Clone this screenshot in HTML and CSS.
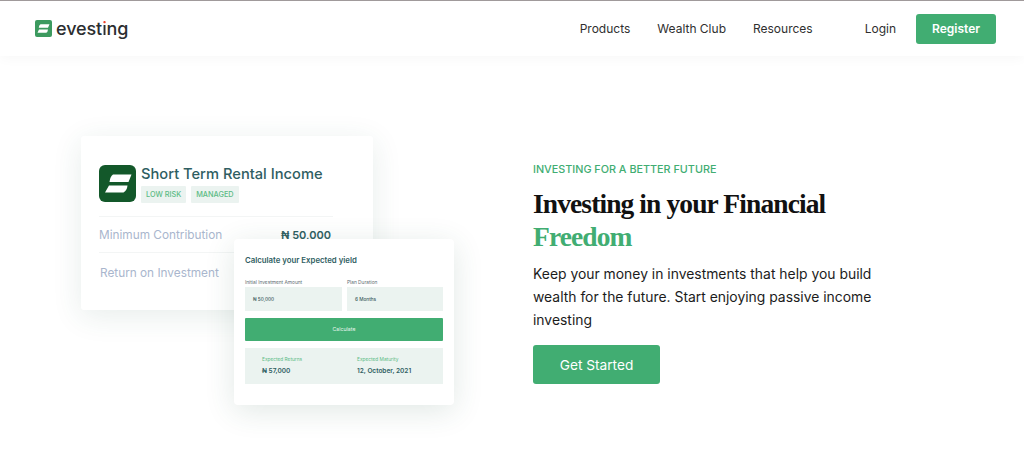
FILE: index.html
```html
<!DOCTYPE html>
<html lang="en">
<head>
<meta charset="utf-8">
<title>evesting</title>
<link rel="stylesheet" href="styles.css">
</head>
<body>
<header class="header">
  <a class="brand">
    <svg class="brand-icon" viewBox="0 0 34 34"><rect width="34" height="34" rx="4" fill="#3c9a5f"/><path d="M11 8.500H29L26 15.500H7.500Q8 10 11 8.500ZM8 19H26Q25.500 24 22.500 25.500H5Z" fill="#fff"/></svg>
    <span class="brand-name">evest<span class="brand-i">i</span>ng</span>
  </a>
  <nav class="nav">
    <a>Products</a><a>Wealth Club</a><a>Resources</a>
  </nav>
  <a class="login">Login</a>
  <a class="register">Register</a>
</header>
<main class="hero">
  <div class="art">
    <section class="rental">
      <div class="rental-head">
        <svg class="rental-icon" viewBox="0 0 37 37"><rect width="37" height="37" rx="6" fill="#13582a"/><path d="M14 9.500H32.500L29.500 17H10.500Q11 11.500 14 9.500ZM10 20.500H28.500Q28 25.500 24.500 27.500H6Z" fill="#fff"/></svg>
        <div>
          <h2 class="rental-title">Short Term Rental Income</h2>
          <div class="tags"><span class="tag">LOW RISK</span><span class="tag">MANAGED</span></div>
        </div>
      </div>
      <div class="row first"><span>Minimum Contribution</span><b>₦ 50,000</b></div>
      <div class="row last"><span>Return on Investment</span></div>
    </section>
    <section class="calc">
      <h3 class="calc-title">Calculate your Expected yield</h3>
      <div class="fields">
        <div class="field"><label>Initial Investment Amount</label><div class="input">₦ 50,000</div></div>
        <div class="field"><label>Plan Duration</label><div class="input">6 Months</div></div>
      </div>
      <div class="calc-btn">Calculate</div>
      <div class="result">
        <div><small>Expected Returns</small><b>₦ 57,000</b></div>
        <div><small>Expected Maturity</small><b>12, October, 2021</b></div>
      </div>
    </section>
  </div>
  <div class="copy">
    <p class="eyebrow">INVESTING FOR A BETTER FUTURE</p>
    <h1 class="title">Investing in your Financial <em>Freedom</em></h1>
    <p class="lead">Keep your money in investments that help you build wealth for the future. Start enjoying passive income investing</p>
    <a class="cta">Get Started</a>
  </div>
</main>
</body>
</html>
```
FILE: styles.css
```css
* { box-sizing: border-box; }
html, body { margin: 0; }
body {
  height: 464px;
  overflow: hidden;
  background: #fff;
  font-family: "Inter", "Noto Sans", sans-serif;
  border-top: 1px solid #a09a9b;
}
.header {
  height: 55px;
  display: flex;
  align-items: center;
  padding: 0 28px 0 35px;
  box-shadow: 0 2px 12px rgba(0, 0, 0, .035);
  position: relative;
}
.brand { display: flex; align-items: center; gap: 4px; }
.brand-icon { width: 17px; height: 17px; }
.brand-name {
  font-size: 18px;
  font-weight: 500;
  color: #2b2e30;
  letter-spacing: -.1px;
}
.brand-i {
  color: transparent;
  background: linear-gradient(#f0442c 0, #f0442c 34%, #2b2e30 34%);
  -webkit-background-clip: text;
  background-clip: text;
}
.nav { display: flex; gap: 27px; margin-left: auto; font-size: 12px; color: #2f2f2f; }
.login { margin-left: 52px; font-size: 12px; color: #2f2f2f; }
.register {
  margin-left: 20px;
  width: 80px;
  height: 30px;
  display: flex;
  align-items: center;
  justify-content: center;
  background: #41ad72;
  color: #fff;
  font-size: 12px;
  font-weight: 600;
  border-radius: 3px;
}
.hero { display: flex; }
.art { position: relative; width: 533px; height: 408px; flex: none; }
.rental {
  position: absolute;
  left: 81px;
  top: 80px;
  width: 292px;
  height: 174px;
  padding: 29px 18px 0;
  background: #fff;
  border-radius: 3px;
  box-shadow: 0 6px 30px rgba(40, 90, 70, .11);
}
.rental-head { display: flex; gap: 5px; height: 52px; border-bottom: 1px solid #f3f5f5; margin-right: 22px; }
.rental-icon { width: 37px; height: 37px; flex: none; }
.rental-title { margin: 0 0 3px; font-size: 14.700px; font-weight: 500; line-height: 18px; color: #2f5e62; white-space: nowrap; }
.tags { display: flex; gap: 5px; }
.tag { background: #ebf3f0; color: #5cbb85; font-size: 7.300px; font-weight: 500; line-height: 17px; padding: 0 5px; border-radius: 1px; }
.row {
  display: flex;
  justify-content: space-between;
  align-items: center;
  font-size: 11.800px;
  color: #a9b6cd;
}
.row.first { height: 36px; border-bottom: 1px solid #f3f5f5; margin-right: 22px; padding-right: 2px; }
.row b { font-size: 11px; font-weight: 600; color: #2f5e62; }
.row.last { height: 40px; padding-left: 1px; }
.calc {
  position: absolute;
  left: 234px;
  top: 183px;
  width: 220px;
  height: 166px;
  padding: 16px 11px 0;
  background: #fff;
  border-radius: 4px;
  box-shadow: 0 6px 30px rgba(40, 90, 70, .14);
}
.calc-title { margin: 0 0 14px; font-size: 7.800px; line-height: 10px; font-weight: 600; color: #2f5e62; }
.fields { display: flex; gap: 5px; }
.field:first-child { width: 97px; }
.field:last-child { width: 96px; }
.field label { display: block; font-size: 4.800px; line-height: 7px; color: #5d6b70; }
.input { height: 24px; margin-top: 1px; background: #ebf3f0; font-size: 4.700px; font-weight: 500; line-height: 24px; padding-left: 8px; color: #3a5a5c; }
.calc-btn { height: 23px; margin-top: 7px; background: #41ad72; color: #e8f5ee; font-size: 5.200px; line-height: 23px; text-align: center; border-radius: 1px; }
.result { display: flex; height: 36px; margin-top: 7px; padding: 8px 0 0 17px; background: #ebf3f0; }
.result div { flex: none; width: 95px; }
.result small { display: block; font-size: 4.800px; line-height: 7px; color: #5cbb85; }
.result b { display: block; margin-top: 4px; font-size: 6.500px; line-height: 9px; font-weight: 600; color: #2f5e62; }
.copy { padding-top: 107px; width: 360px; }
.eyebrow { margin: 0; font-size: 10.800px; font-weight: 500; line-height: 14px; color: #41ad72; white-space: nowrap; }
.title {
  margin: 10px 0 0;
  font-family: "Liberation Serif", serif;
  font-size: 27.500px;
  font-weight: 700;
  line-height: 33px;
  color: #111;
  letter-spacing: -.9px;
}
.title em { display: block; font-style: normal; color: #41ad72; }
.lead { margin: 10px 0 0; width: 350px; font-size: 13.900px; line-height: 23px; color: #1c1c1c; }
.cta {
  display: flex;
  align-items: center;
  justify-content: center;
  width: 127px;
  height: 39px;
  margin-top: 13px;
  background: #41ad72;
  color: #fff;
  font-size: 13.700px;
  border-radius: 3px;
}
```
